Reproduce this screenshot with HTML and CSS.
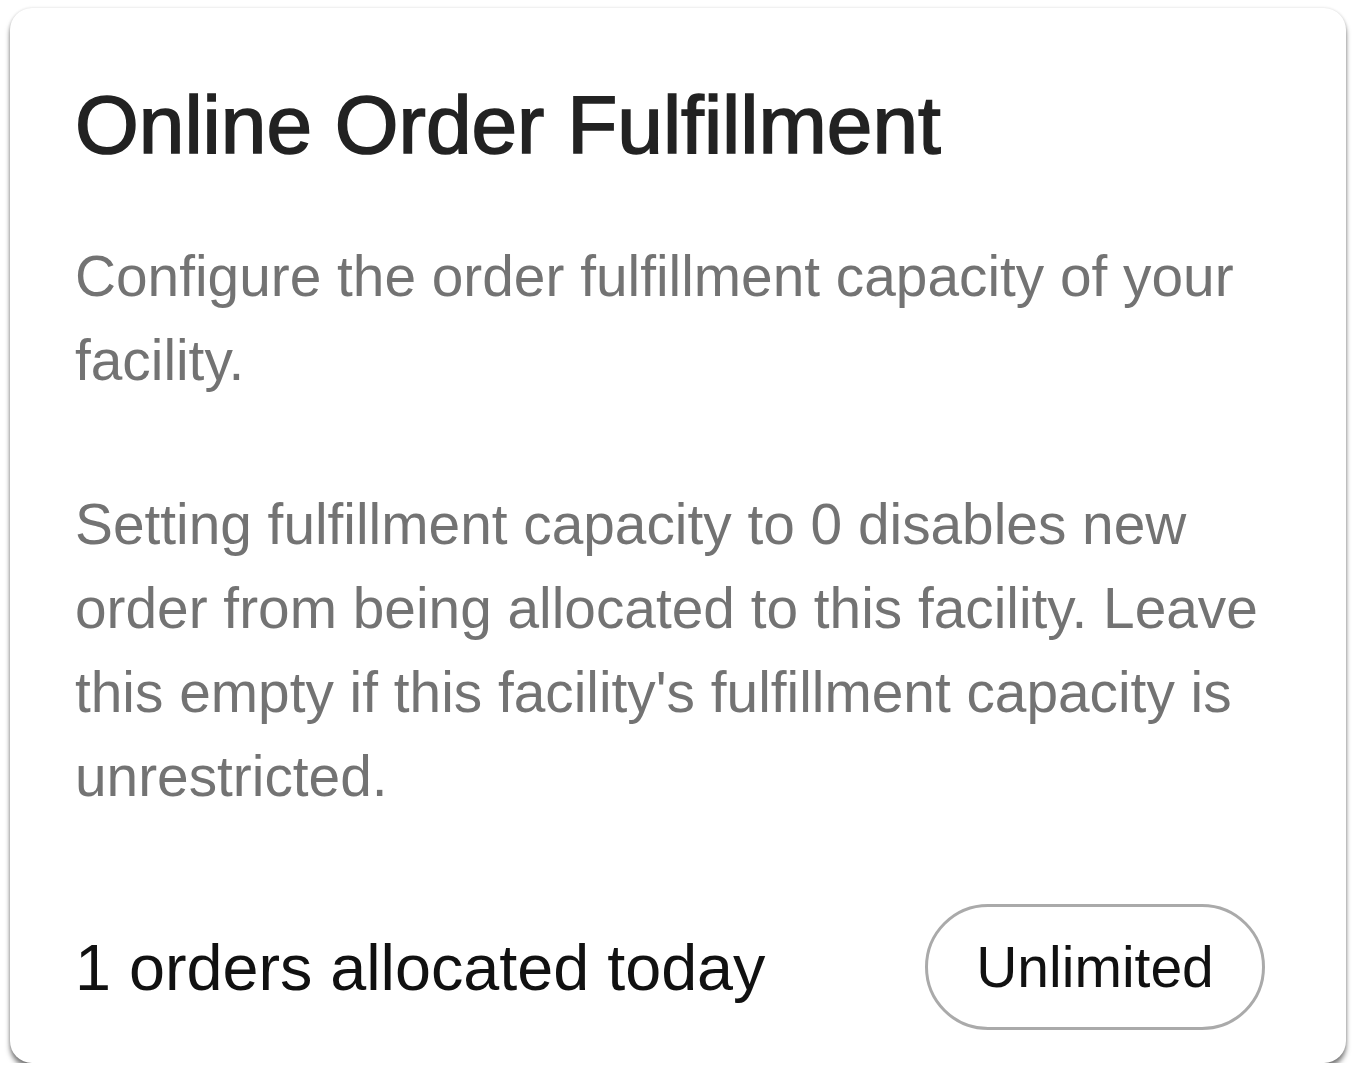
FILE: index.html
```html
<!DOCTYPE html>
<html lang="en">
<head>
<meta charset="UTF-8">
<meta name="viewport" content="width=device-width, initial-scale=1.0">
<title>Online Order Fulfillment</title>
<link rel="stylesheet" href="styles.css">
</head>
<body>

<div class="card">
    <h1 class="card-title">Online Order Fulfillment</h1>
    <p class="card-text">Configure the order fulfillment capacity of your facility.</p>
    <p class="card-text">Setting fulfillment capacity to 0 disables new order from being allocated to this facility. Leave this empty if this facility's fulfillment capacity is unrestricted.</p>
    <div class="card-footer">
        <span class="allocated">1 orders allocated today</span>
        <button class="capacity-button">Unlimited</button>
    </div>
</div>

</body>
</html>
```

FILE: styles.css
```css
body {
    font-family: "Liberation Sans", Arial, sans-serif;
    margin: 0;
    padding: 8px 10px 0 10px;
    background-color: #fff;
}
.card {
    width: 1336px;
    height: 1055px;
    box-sizing: border-box;
    padding: 0 65px;
    background-color: #fff;
    border-radius: 22px;
    box-shadow: 0 5px 5px rgba(0, 0, 0, 0.5), 0 0 3px rgba(0, 0, 0, 0.15);
    display: flex;
    flex-direction: column;
}
.card-title {
    font-size: 82px;
    font-weight: normal;
    -webkit-text-stroke: 1.6px #222;
    color: #222;
    margin: 68px 0 0 0;
    line-height: 1.2;
}
.card-text {
    font-size: 56.8px;
    line-height: 84px;
    color: #737373;
    margin: 61px 0 0 0;
}
.card-text + .card-text {
    margin-top: 80px;
}
.card-footer {
    margin-top: auto;
    margin-bottom: 33px;
    display: flex;
    justify-content: space-between;
    align-items: center;
}
.allocated {
    font-size: 64.7px;
    color: #111;
}
.capacity-button {
    font-family: inherit;
    font-size: 57px;
    color: #111;
    background-color: #fff;
    border: 3px solid #aaa;
    border-radius: 70px;
    width: 340px;
    height: 126px;
    margin-right: 16px;
    padding: 0;
}
```
